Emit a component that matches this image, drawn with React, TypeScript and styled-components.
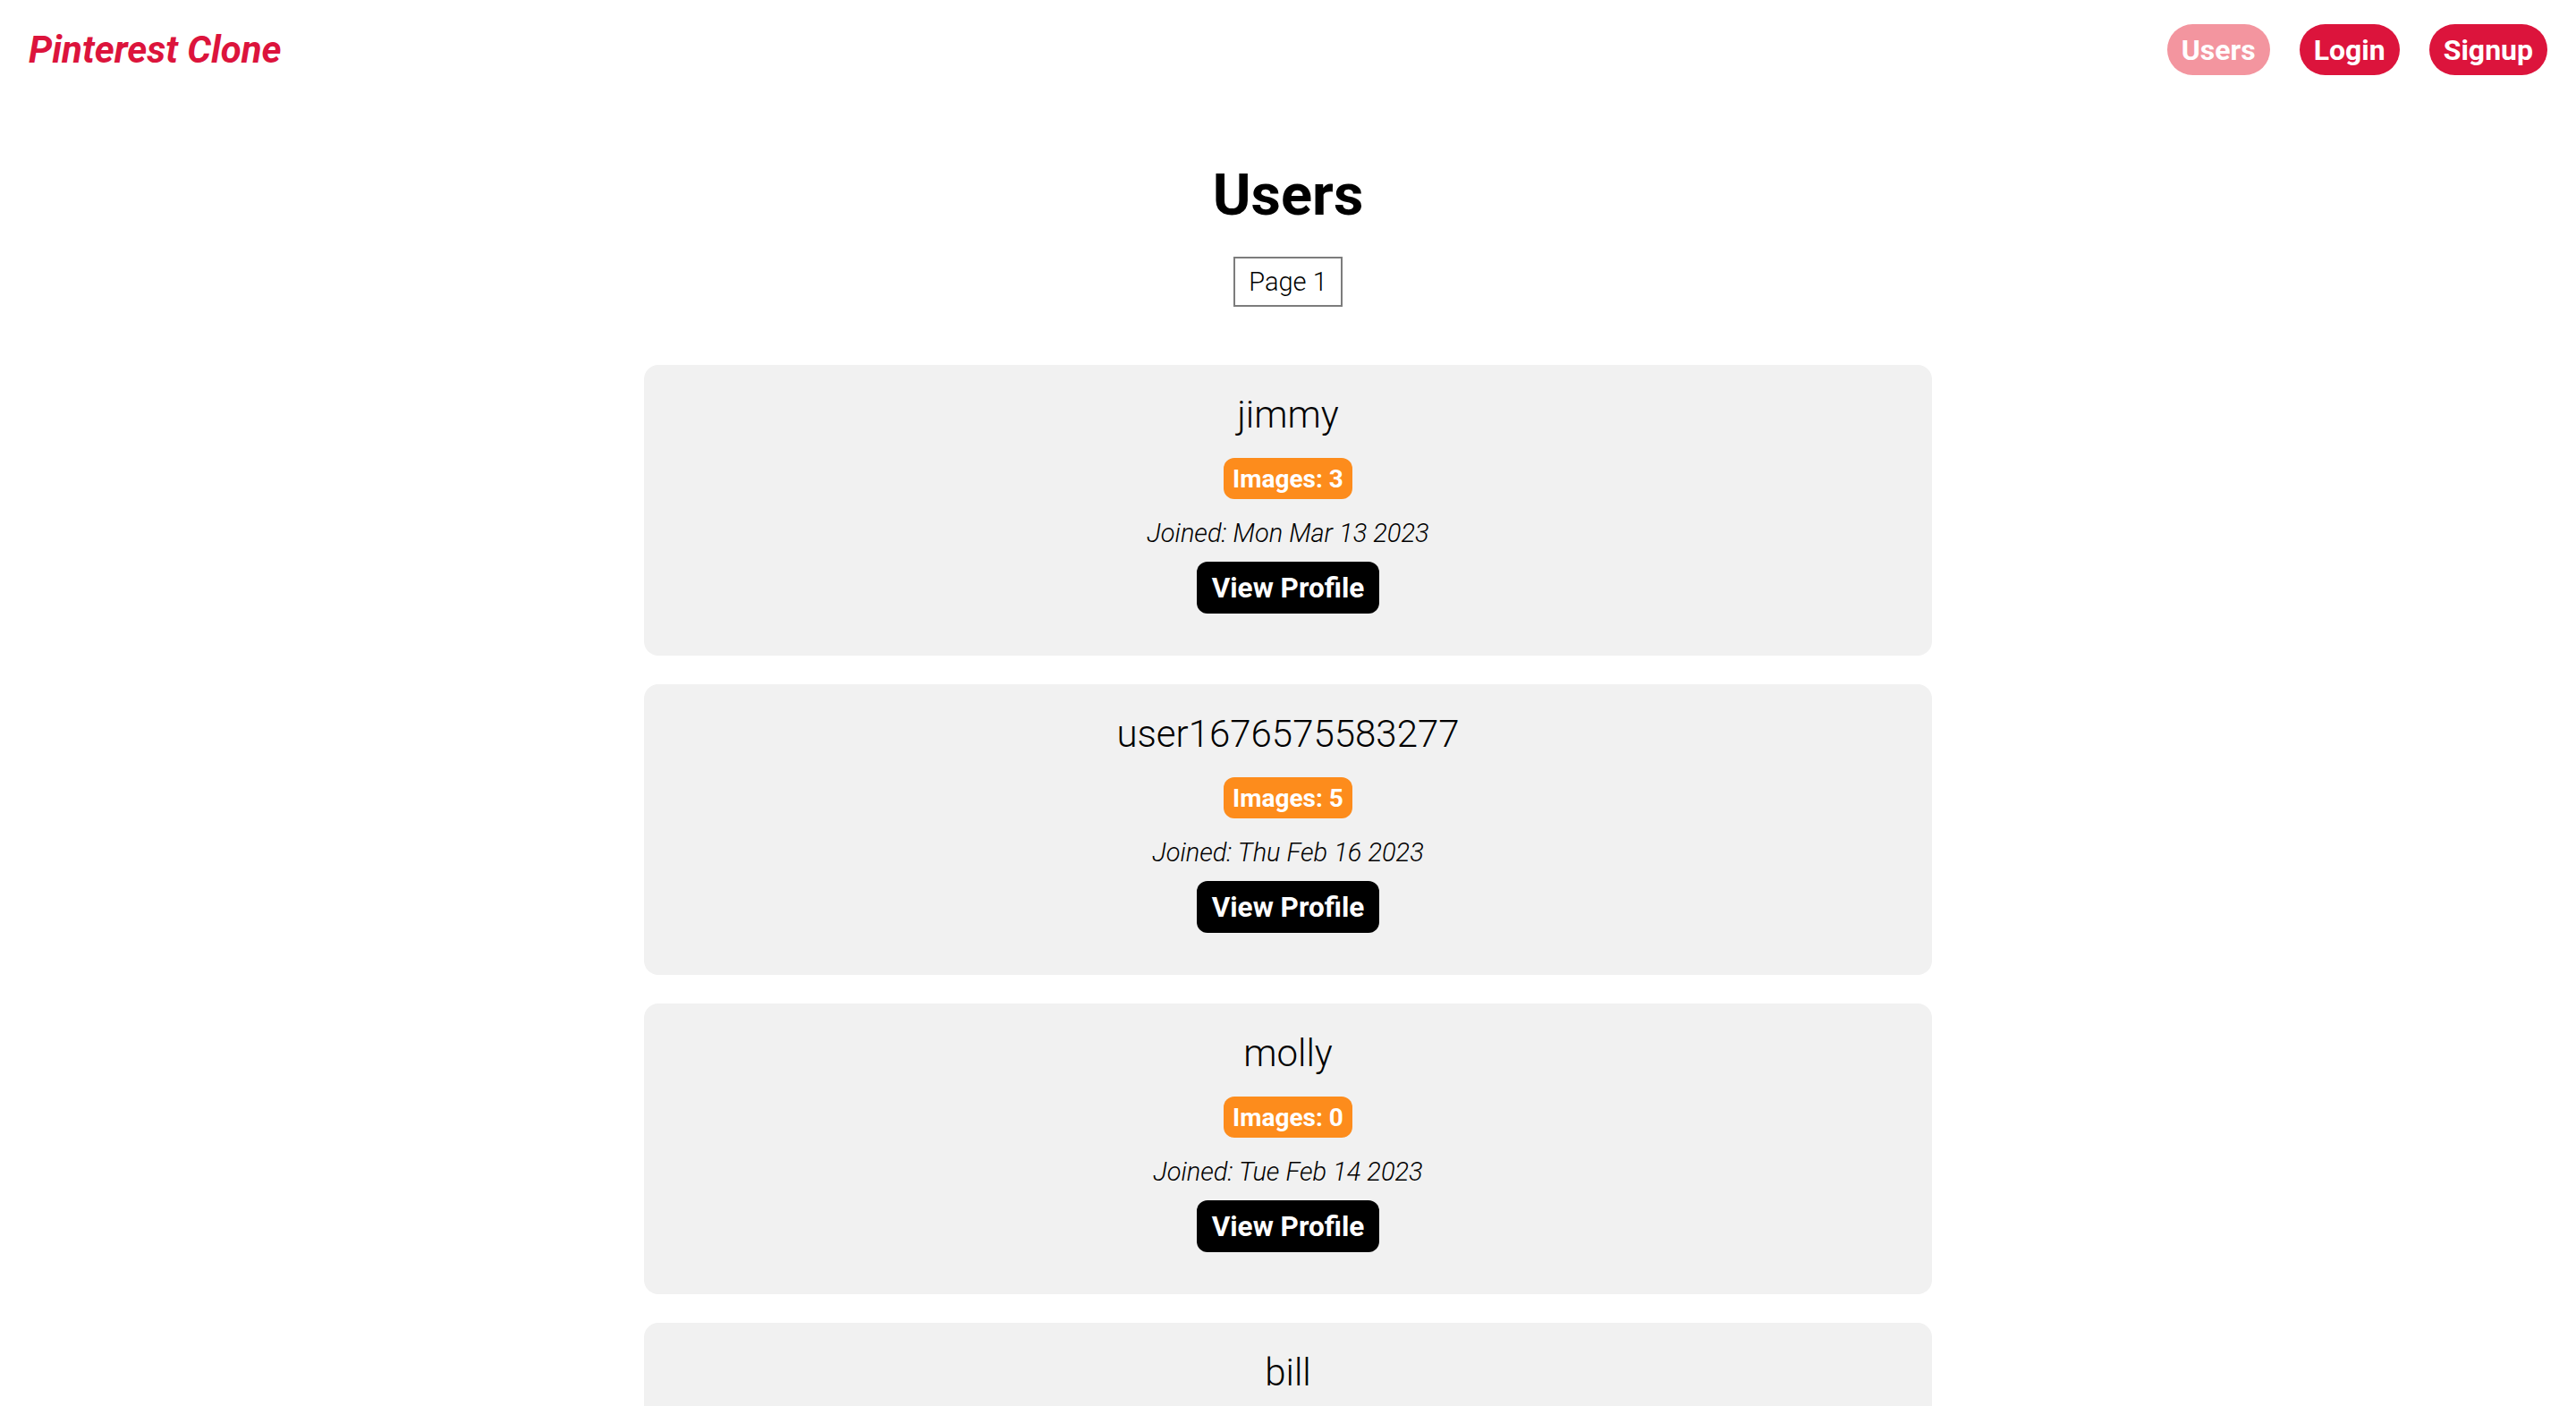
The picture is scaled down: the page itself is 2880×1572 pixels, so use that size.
import React from "react";
import styled, { createGlobalStyle } from "styled-components";

const GlobalStyle = createGlobalStyle`
  html, body {
    margin: 0;
    padding: 0;
    background: #ffffff;
  }
  body {
    font-family: Roboto, "Liberation Sans", Arial, sans-serif;
    color: #000000;
  }
  * { box-sizing: border-box; }
`;

const Header = styled.header`
  display: flex;
  align-items: center;
  justify-content: space-between;
  padding: 27px 32px;
`;

const Logo = styled.a`
  font-size: 42px;
  font-weight: 700;
  font-style: italic;
  line-height: 48px;
  color: #dc143c;
  text-decoration: none;
`;

const Nav = styled.nav`
  display: flex;
  align-items: center;
  gap: 33px;
`;

const NavButton = styled.a<{ $active?: boolean }>`
  display: inline-flex;
  align-items: center;
  justify-content: center;
  height: 57px;
  padding: 0 16px;
  border-radius: 999px;
  background: ${(p) => (p.$active ? "#f3959f" : "#dc143c")};
  color: #ffffff;
  font-size: 32px;
  font-weight: 700;
  text-decoration: none;
`;

const Main = styled.main`
  display: flex;
  flex-direction: column;
  align-items: center;
  padding-bottom: 40px;
`;

const Title = styled.h1`
  margin: 69px 0 0;
  font-size: 65px;
  font-weight: 700;
  line-height: 76px;
`;

const PageBox = styled.div`
  margin-top: 31px;
  height: 56px;
  padding: 0 15px;
  display: flex;
  align-items: center;
  justify-content: center;
  border: 2px solid #7c7c7c;
  font-size: 29px;
  font-weight: 300;
`;

const CardList = styled.div`
  margin-top: 65px;
  width: 1440px;
  display: flex;
  flex-direction: column;
  gap: 32px;
`;

const Card = styled.section`
  display: flex;
  flex-direction: column;
  align-items: center;
  padding: 32px 24px 47px;
  background: #f1f1f1;
  border-radius: 16px;
`;

const Name = styled.h2`
  margin: 0;
  font-size: 42px;
  font-weight: 300;
  line-height: 48px;
`;

const Badge = styled.span`
  margin-top: 24px;
  height: 46px;
  padding: 0 10.5px;
  display: inline-flex;
  align-items: center;
  border-radius: 12px;
  background: #fd8c1c;
  color: #ffffff;
  font-size: 28px;
  font-weight: 700;
`;

const Joined = styled.p`
  margin: 21.5px 0 0;
  font-size: 29px;
  font-style: italic;
  font-weight: 300;
  line-height: 32px;
`;

const ProfileButton = styled.a`
  margin-top: 16.5px;
  height: 58px;
  padding: 0 16.5px;
  display: inline-flex;
  align-items: center;
  border-radius: 12px;
  background: #000000;
  color: #ffffff;
  font-size: 31.5px;
  font-weight: 700;
  text-decoration: none;
`;

type User = { name: string; images: number; joined: string };

const users: User[] = [
  { name: "jimmy", images: 3, joined: "Mon Mar 13 2023" },
  { name: "user1676575583277", images: 5, joined: "Thu Feb 16 2023" },
  { name: "molly", images: 0, joined: "Tue Feb 14 2023" },
  { name: "bill", images: 2, joined: "Mon Feb 13 2023" },
];

export default function App() {
  return (
    <>
      <GlobalStyle />
      <Header>
        <Logo href="#">Pinterest Clone</Logo>
        <Nav>
          <NavButton href="#" $active>
            Users
          </NavButton>
          <NavButton href="#">Login</NavButton>
          <NavButton href="#">Signup</NavButton>
        </Nav>
      </Header>
      <Main>
        <Title>Users</Title>
        <PageBox>Page 1</PageBox>
        <CardList>
          {users.map((u) => (
            <Card key={u.name}>
              <Name>{u.name}</Name>
              <Badge>Images: {u.images}</Badge>
              <Joined>Joined: {u.joined}</Joined>
              <ProfileButton href="#">View Profile</ProfileButton>
            </Card>
          ))}
        </CardList>
      </Main>
    </>
  );
}
